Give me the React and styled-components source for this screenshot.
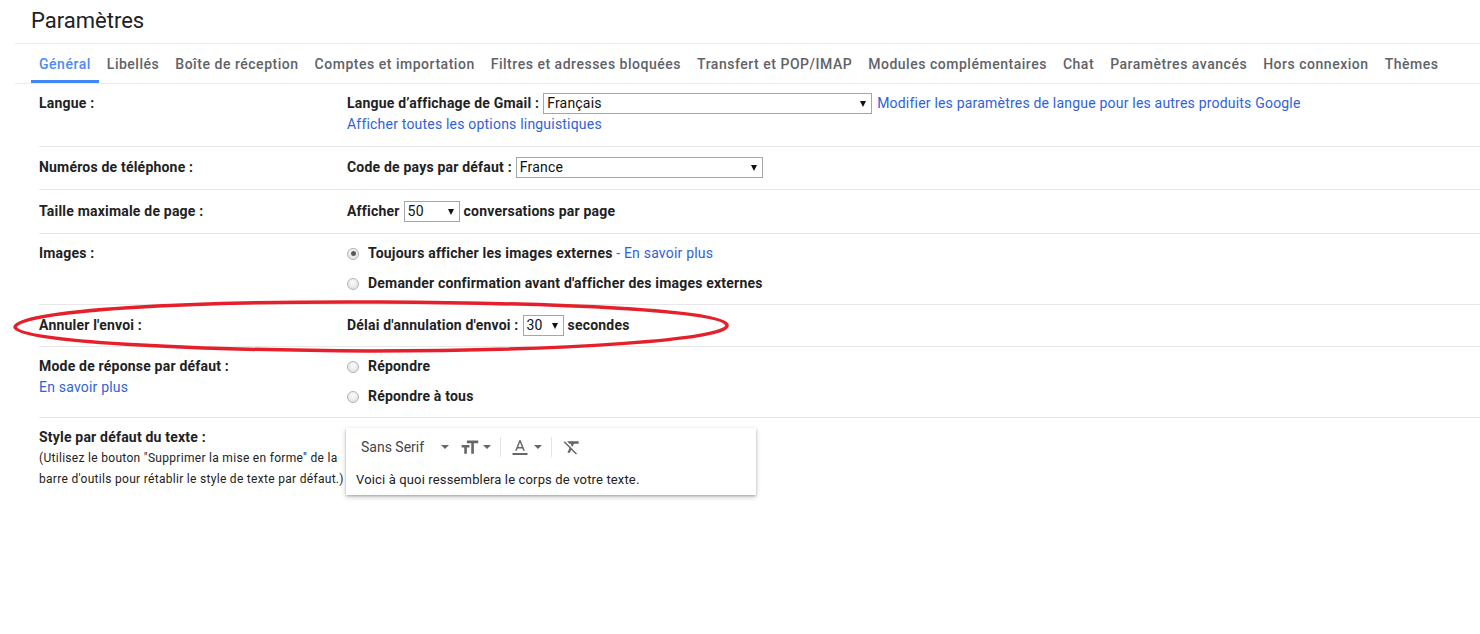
import React from "react"
import { createGlobalStyle, styled } from "styled-components"

const GlobalStyle = createGlobalStyle`
  html, body {
    margin: 0;
    padding: 0;
    background: #fff;
  }
  body {
    font-family: Roboto, "Noto Sans", "Liberation Sans", sans-serif;
    color: #222;
  }
`

const tabs = [
  "Général",
  "Libellés",
  "Boîte de réception",
  "Comptes et importation",
  "Filtres et adresses bloquées",
  "Transfert et POP/IMAP",
  "Modules complémentaires",
  "Chat",
  "Paramètres avancés",
  "Hors connexion",
  "Thèmes"
]

const Page = styled.div`
  position: relative;
  width: 1480px;
  height: 634px;
  overflow: hidden;
`

const Header = styled.div`
  display: flex;
  align-items: center;
  height: 41px;
  margin-left: 15px;
  padding-left: 16px;
  padding-bottom: 2px;
  border-bottom: 1px solid #ebebeb;
  font-size: 22px;
  color: #202124;
`

const TabBar = styled.div`
  display: flex;
  height: 39px;
  margin-left: 15px;
  padding-left: 16px;
  border-bottom: 1px solid #ebebeb;
`

const Tab = styled.div`
  display: flex;
  align-items: center;
  padding: 3px 8px 0;
  font-size: 14px;
  font-weight: 500;
  letter-spacing: 0.52px;
  white-space: nowrap;
  color: ${(p) => (p.$active ? "#4c8bf5" : "#5f6368")};
  border-bottom: 3px solid ${(p) => (p.$active ? "#4285f4" : "transparent")};
`

const Settings = styled.div`
  margin-left: 39px;
  letter-spacing: 0.2px;
`

const Row = styled.div`
  display: grid;
  grid-template-columns: 308px 1fr;
  padding: ${(p) => p.$pad || "9px 0 10px"};
  border-bottom: ${(p) => (p.$last ? "none" : "1px solid #e8e8e8")};
  font-size: 14px;
  line-height: 21px;
`

const Label = styled.div`
  font-weight: 700;
  color: #222;
`

const Note = styled.div`
  font-size: 12px;
  line-height: 21px;
  letter-spacing: 0.3px;
  color: #222;
  white-space: nowrap;
`

const Value = styled.div`
  display: flex;
  flex-direction: column;
  gap: ${(p) => p.$gap || "0px"};
`

const Line = styled.div`
  display: flex;
  align-items: center;
  white-space: nowrap;
  font-weight: ${(p) => (p.$plain ? 400 : 700)};
`

const Link = styled.span`
  color: #2f62d8;
  font-weight: 400;
  margin-left: ${(p) => p.$gap || "0px"};
`

const Select = styled.div`
  display: inline-flex;
  align-items: center;
  justify-content: space-between;
  box-sizing: border-box;
  width: ${(p) => p.$width}px;
  height: 21px;
  margin: 0 4px;
  padding: 0 5px 0 3px;
  border: 1px solid #a6a6a6;
  background: #fff;
  font-weight: 400;
  color: #111;
  &::after {
    content: "";
    border-left: 3.5px solid transparent;
    border-right: 3.5px solid transparent;
    border-top: 6px solid #111;
  }
`

const Radio = styled.span`
  display: inline-block;
  box-sizing: border-box;
  width: 12px;
  height: 12px;
  margin-right: 9px;
  border-radius: 50%;
  border: 1px solid #b4b4b4;
  background: radial-gradient(circle at 50% 35%, #fbfbfb 0%, #dcdcdc 100%);
  position: relative;
  &::after {
    content: "";
    display: ${(p) => (p.$checked ? "block" : "none")};
    position: absolute;
    left: 2.5px;
    top: 2.5px;
    width: 5px;
    height: 5px;
    border-radius: 50%;
    background: #5a5a5a;
  }
`

const Composer = styled.div`
  width: 410px;
  height: 67px;
  margin: 1px 0 0 -1px;
  box-sizing: border-box;
  background: #fff;
  letter-spacing: 0;
  box-shadow: 0 1px 2px rgba(0, 0, 0, 0.2), 0 2px 5px rgba(0, 0, 0, 0.22);
`

const Toolbar = styled.div`
  display: flex;
  align-items: center;
  height: 38px;
  padding-left: 15px;
  color: #444;
`

const FontName = styled.span`
  font-size: 14px;
  font-weight: 400;
  margin-right: 14px;
`

const Caret = styled.span`
  display: inline-block;
  margin: 0 ${(p) => p.$right || 8}px 0 ${(p) => p.$left || 3}px;
  border-left: 4px solid transparent;
  border-right: 4px solid transparent;
  border-top: 4px solid #666;
`

const Divider = styled.span`
  width: 1px;
  height: 20px;
  margin: 0 10px 0 0;
  background: #e4e4e4;
`

const Preview = styled.div`
  padding: 4px 10px 0;
  font-size: 13px;
  line-height: 20px;
  letter-spacing: 0.15px;
  color: #222;
`

const Scribble = styled.svg`
  position: absolute;
  left: 0;
  top: 0;
  pointer-events: none;
`

const Icon = ({ d, size = 20 }) => (
  <svg width={size} height={size} viewBox="0 0 24 24" fill="#666">
    <path d={d} />
  </svg>
)

const SIZE_ICON = "M9 4v3h5v12h3V7h5V4H9zm-6 8h3v7h3v-7h3V9H3v3z"
const COLOR_ICON = "M11 3L5.5 17h2.25l1.12-3h6.25l1.12 3h2.25L13 3h-2zm-1.38 9L12 5.67 14.38 12H9.62zM2 20h20v2.5H2z"
const CLEAR_ICON =
  "M3.27 5L2 6.27l6.97 6.97L6.5 19h3l1.57-3.66L16.73 21 18 19.73 3.55 5.27 3.27 5zM6 5v.18L8.82 8h2.4l-.72 1.68 2.1 2.1L14.21 8H20V5H6z"

export default function App() {
  return (
    <Page>
      <GlobalStyle />
      <Header>Paramètres</Header>
      <TabBar>
        {tabs.map((t, i) => (
          <Tab key={t} $active={i === 0}>
            {t}
          </Tab>
        ))}
      </TabBar>

      <Settings>
        <Row $pad="9px 0 11px">
          <Label>Langue :</Label>
          <Value>
            <Line>
              Langue d’affichage de Gmail :
              <Select $width={329}>Français</Select>
              <Link $gap="1px">Modifier les paramètres de langue pour les autres produits Google</Link>
            </Line>
            <Line $plain>
              <Link>Afficher toutes les options linguistiques</Link>
            </Line>
          </Value>
        </Row>

        <Row $pad="10px 0 11px">
          <Label>Numéros de téléphone :</Label>
          <Line>
            Code de pays par défaut :<Select $width={247}>France</Select>
          </Line>
        </Row>

        <Row $pad="11px 0 11px">
          <Label>Taille maximale de page :</Label>
          <Line>
            Afficher<Select $width={56}>50</Select>conversations par page
          </Line>
        </Row>

        <Row $pad="9px 0 10px">
          <Label>Images :</Label>
          <Value $gap="9px">
            <Line>
              <Radio $checked />
              Toujours afficher les images externes
              <Link>&nbsp;- En savoir plus</Link>
            </Line>
            <Line>
              <Radio />
              Demander confirmation avant d'afficher des images externes
            </Line>
          </Value>
        </Row>

        <Row $pad="10px 0 10px">
          <Label>Annuler l'envoi :</Label>
          <Line>
            Délai d'annulation d'envoi :<Select $width={41}>30</Select>secondes
          </Line>
        </Row>

        <Row $pad="9px 0 10px">
          <div>
            <Label>Mode de réponse par défaut :</Label>
            <Link>En savoir plus</Link>
          </div>
          <Value $gap="9px">
            <Line>
              <Radio />
              Répondre
            </Line>
            <Line>
              <Radio />
              Répondre à tous
            </Line>
          </Value>
        </Row>

        <Row $pad="9px 0 10px" $last>
          <div>
            <Label>Style par défaut du texte :</Label>
            <Note>
              (Utilisez le bouton "Supprimer la mise en forme" de la
              <br />
              barre d'outils pour rétablir le style de texte par défaut.)
            </Note>
          </div>
          <Composer>
            <Toolbar>
              <FontName>Sans Serif</FontName>
              <Caret $left={0} $right={10} />
              <Icon d={SIZE_ICON} size={21} />
              <Caret $left={3} $right={9} />
              <Divider />
              <Icon d={COLOR_ICON} size={18} />
              <Caret $left={5} $right={9} />
              <Divider />
              <Icon d={CLEAR_ICON} size={20} />
            </Toolbar>
            <Preview>Voici à quoi ressemblera le corps de votre texte.</Preview>
          </Composer>
        </Row>
      </Settings>

      <Scribble width="1480" height="634">
        <path
          d="M 15 327 C 20 310, 190 301, 380 302 C 560 303, 722 310, 727 325 C 731 340, 560 351, 370 351 C 190 350, 18 342, 15 327 Z"
          fill="none"
          stroke="#e5202a"
          strokeWidth="3.5"
        />
      </Scribble>
    </Page>
  )
}
